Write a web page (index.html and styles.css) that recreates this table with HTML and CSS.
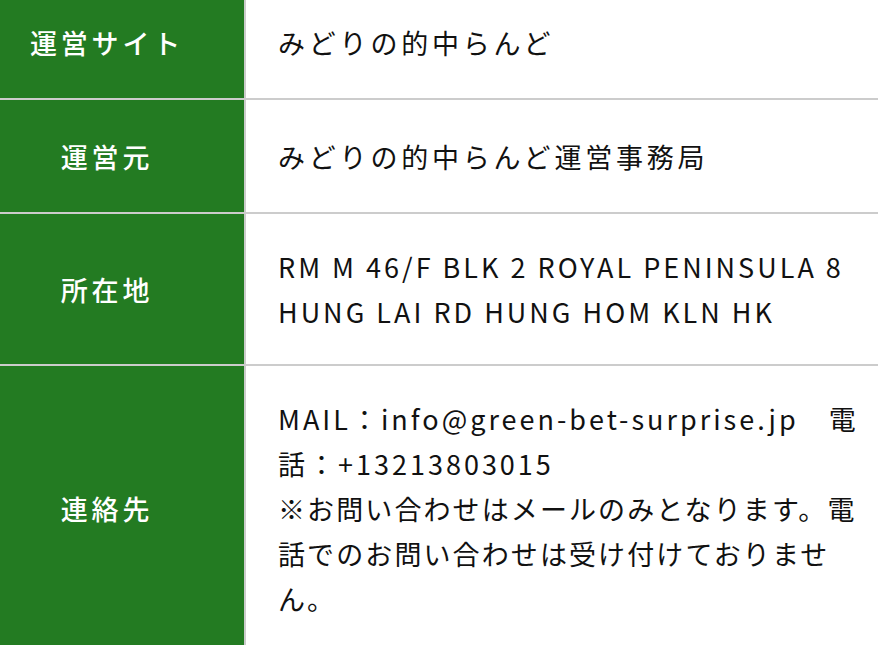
FILE: index.html
```html
<!DOCTYPE html>
<html lang="ja">
<head>
<meta charset="utf-8">
<link rel="stylesheet" href="styles.css">
</head>
<body>
<table class="info">
  <tr>
    <th class="label">運営サイト</th>
    <td class="value wide">みどりの的中らんど</td>
  </tr>
  <tr>
    <th class="label">運営元</th>
    <td class="value wide">みどりの的中らんど運営事務局</td>
  </tr>
  <tr>
    <th class="label">所在地</th>
    <td class="value">RM M 46/F BLK 2 ROYAL PENINSULA 8 HUNG LAI RD HUNG HOM KLN HK</td>
  </tr>
  <tr>
    <th class="label">連絡先</th>
    <td class="value">MAIL：info@green-bet-surprise.jp　電話：+13213803015<br><span class="note">※お問い合わせはメールのみとなります。電話でのお問い合わせは受け付けておりません。</span></td>
  </tr>
</table>
</body>
</html>
```
FILE: styles.css
```css
html, body {
  margin: 0;
  padding: 0;
  background: #fff;
  overflow: hidden;
}
.info {
  border-collapse: collapse;
  table-layout: fixed;
  width: 936px;
  margin: -16px 0 0 -36px;
  font-family: "Noto Sans CJK JP", "Noto Sans", sans-serif;
  font-size: 27px;
  line-height: 45px;
  letter-spacing: 3px;
}
.info th, .info td {
  box-sizing: border-box;
  border: 2px solid #cccccc;
}
.label {
  width: 280px;
  background: #237b22;
  color: #fff;
  font-weight: 500;
  letter-spacing: 3.8px;
  text-align: center;
  padding: 33.5px 6px 33.5px 10px;
  vertical-align: middle;
}
.value {
  color: #111;
  text-align: left;
  padding: 30px 32px 30px 32px;
  vertical-align: middle;
}
.wide {
  letter-spacing: 3.8px;
}
.note {
  letter-spacing: 2.1px;
}
```
